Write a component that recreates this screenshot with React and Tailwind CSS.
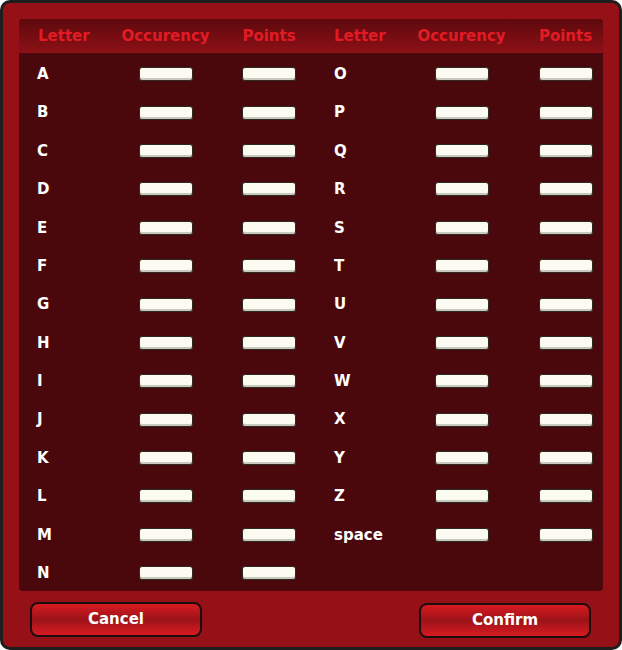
import React from 'react';

const left = 'ABCDEFGHIJKLMN'.split('');
const right = 'OPQRSTUVWXYZ'.split('').concat(['space']);

function Field() {
  return (
    <div className="w-[54px] h-[14px] rounded-[3px] bg-[#fbfbf1] border border-[#2a2a22] shadow-[inset_0_-2px_0_#c9c9bf]" />
  );
}

export default function App() {
  const rows = left.map((l, i) => [l, right[i]]);
  return (
    <div className="w-[622px] h-[650px] bg-[#951117] border-[3px] border-[#1e1e1e] rounded-[10px] px-4 pt-4 flex flex-col" style={{ fontFamily: '"DejaVu Sans", Verdana, sans-serif' }}>
      <div className="h-[572px] bg-[#4a080c] rounded-[4px] flex flex-col">
        <div className="h-[34px] shrink-0 rounded-t-[4px] bg-gradient-to-b from-[#5e090d] to-[#8d1117] grid grid-cols-[96px_101px_106px_89px_101px_91px] items-center text-[15px] font-bold text-[#e31b24]">
          <div className="pl-[19px]">Letter</div>
          <div className="text-center">Occurency</div>
          <div className="text-center">Points</div>
          <div className="pl-[12px]">Letter</div>
          <div className="text-center">Occurency</div>
          <div className="pl-4 text-center">Points</div>
        </div>
        <div className="pt-[2px]">
          {rows.map(([l, r]) => (
            <div key={l} className="h-[38.4px] grid grid-cols-[96px_101px_106px_89px_101px_91px] items-center text-[15px] font-bold text-white">
              <div className="pl-[18px]">{l}</div>
              <div className="flex justify-center"><Field /></div>
              <div className="flex justify-center"><Field /></div>
              <div className="pl-[12px]">{r}</div>
              <div className="flex justify-center">{r && <Field />}</div>
              <div className="pl-4 flex justify-center">{r && <Field />}</div>
            </div>
          ))}
        </div>
      </div>
      <div className="flex justify-between px-[11px] pr-[12px] mt-[11px]">
        <button className="w-[172px] h-[35px] rounded-[8px] border-2 border-[#1c0e0e] bg-gradient-to-b from-[#d81a21] via-[#9c1419] to-[#d81a21] text-white text-[15px] font-bold">Cancel</button>
        <button className="w-[172px] h-[35px] mt-[1px] rounded-[8px] border-2 border-[#1c0e0e] bg-gradient-to-b from-[#d81a21] via-[#9c1419] to-[#d81a21] text-white text-[15px] font-bold">Confirm</button>
      </div>
    </div>
  );
}
